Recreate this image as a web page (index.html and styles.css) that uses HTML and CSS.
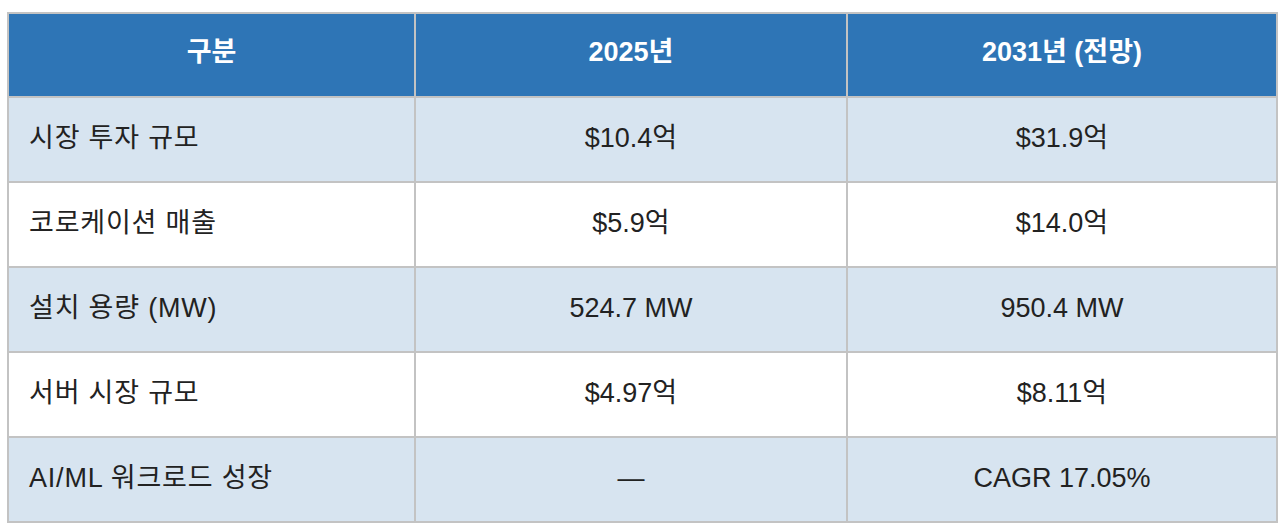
FILE: index.html
```html
<!DOCTYPE html>
<html lang="ko">
<head>
<meta charset="utf-8">
<title>시장 전망</title>
<link rel="stylesheet" href="styles.css">
</head>
<body>
<div class="wrap">
<table class="market">
<colgroup>
<col class="c1"><col class="c2"><col class="c3">
</colgroup>
<thead>
<tr><th>구분</th><th>2025년</th><th>2031년 (전망)</th></tr>
</thead>
<tbody>
<tr class="alt"><td class="label">시장 투자 규모</td><td>$10.4억</td><td>$31.9억</td></tr>
<tr><td class="label">코로케이션 매출</td><td>$5.9억</td><td>$14.0억</td></tr>
<tr class="alt"><td class="label">설치 용량 (MW)</td><td>524.7 MW</td><td>950.4 MW</td></tr>
<tr><td class="label">서버 시장 규모</td><td>$4.97억</td><td>$8.11억</td></tr>
<tr class="alt"><td class="label">AI/ML 워크로드 성장</td><td>—</td><td>CAGR 17.05%</td></tr>
</tbody>
</table>
</div>
</body>
</html>
```
FILE: styles.css
```css
html, body {
  margin: 0;
  padding: 0;
  background: #ffffff;
}
.wrap {
  padding: 12px 4px 0 7px;
}
.market {
  width: 1269px;
  border-collapse: collapse;
  table-layout: fixed;
  font-family: "Liberation Sans", "Noto Sans CJK KR", sans-serif;
  font-size: 27px;
  line-height: 32px;
  color: #222222;
}
.c1 { width: 407px; }
.c2 { width: 432px; }
.c3 { width: 430px; }
.market th,
.market td {
  border: 2px solid #c3c3c3;
  text-align: center;
  vertical-align: middle;
  padding: 0 10px 4px;
}
.market th {
  background: #2e75b6;
  color: #ffffff;
  font-weight: bold;
  font-size: 27px;
  height: 76px;
  padding-bottom: 6px;
}
.market td {
  height: 79px;
}
.market tr.alt td {
  background: #d7e4f0;
}
.market td.label {
  text-align: left;
  padding-left: 20px;
  letter-spacing: 0.8px;
}
```
